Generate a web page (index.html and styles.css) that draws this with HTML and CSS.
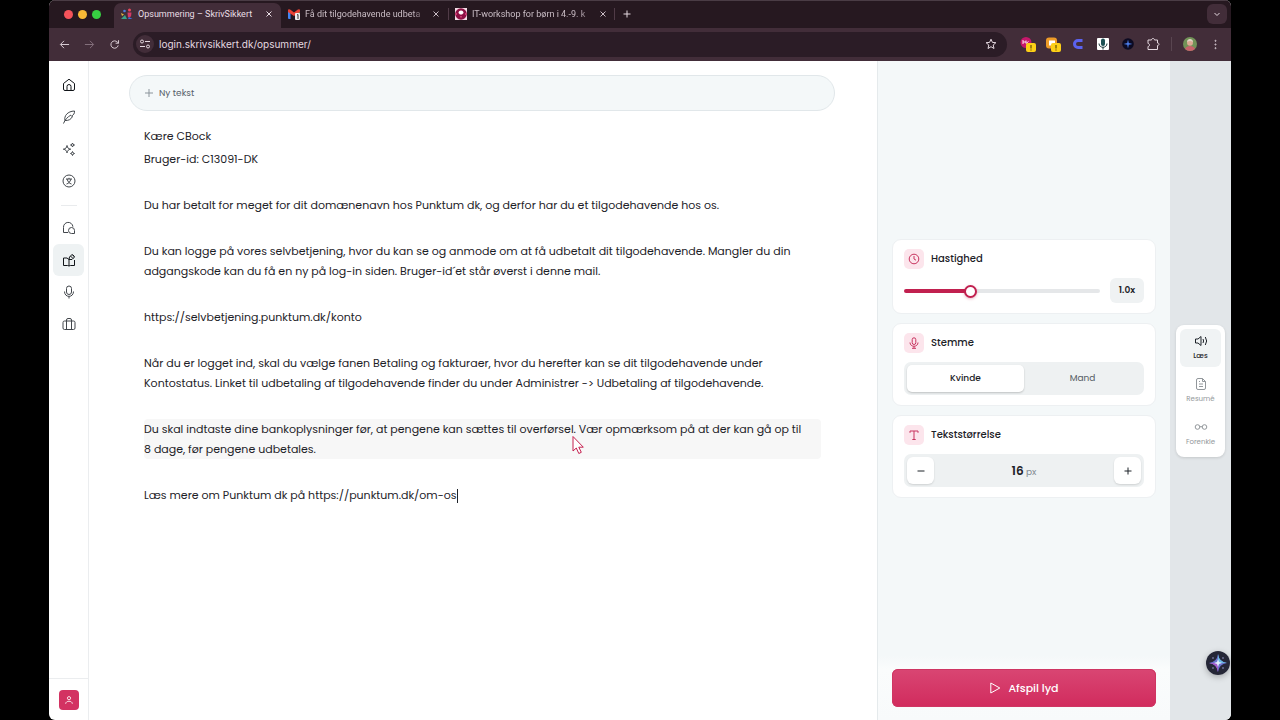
FILE: index.html
```html
<!DOCTYPE html>
<html lang="da">
<head>
    <meta charset="UTF-8">
    <meta name="viewport" content="width=device-width, initial-scale=1.0">
    <title>Opsummering – SkrivSikkert</title>
    <link rel="stylesheet" href="styles.css">
</head>
<body>
    <div class="window">
        <header class="browser">
            <div class="tab-strip">
                <div class="lights"><span class="light red"></span><span class="light yellow"></span><span class="light green"></span></div>
                <div class="tab active">
                    <svg class="favicon" viewBox="0 0 12 12"><circle cx="3.500" cy="3" r="1.300" fill="#4c7de0"/><circle cx="8.500" cy="2" r="1.500" fill="#e8495c"/><path d="M0 5l3 1.500L1 8z" fill="#e0b93e"/><path d="M6.500 4.500h4l-.5 4-3 1z" fill="#d53868"/><path d="M0 11l4-4 2 4z" fill="#39a28a"/><path d="M8 9l3.500 2H7z" fill="#3d6dd8"/></svg>
                    <span class="tab-title">Opsummering – SkrivSikkert</span>
                    <button class="tab-close" aria-label="Luk fane"><svg viewBox="0 0 8 8"><path d="M1.500 1.500l5 5M6.500 1.500l-5 5"/></svg></button>
                </div>
                <div class="tab">
                    <svg class="favicon" viewBox="0 0 12 12"><path d="M0 2.500L2.500 4v7H1a1 1 0 0 1-1-1z" fill="#4285f4"/><path d="M9.500 4L12 2.500V10a1 1 0 0 1-1 1H9.500z" fill="#34a853"/><path d="M0 2.500C0 1 1.500 1 2.500 1.800L6 4.500l3.500-2.700C10.500 1 12 1 12 2.500V4L6 8 0 4z" fill="#ea4335"/><rect x="7" y="5" width="5" height="7" rx="1" fill="#eee"/><path d="M9 7l1-.5V11" stroke="#333" fill="none"/></svg>
                    <span class="tab-title fade">Få dit tilgodehavende udbeta</span>
                    <button class="tab-close" aria-label="Luk fane"><svg viewBox="0 0 8 8"><path d="M1.500 1.500l5 5M6.500 1.500l-5 5"/></svg></button>
                </div>
                <div class="tab divided">
                    <svg class="favicon" viewBox="0 0 12 12"><rect width="12" height="12" fill="#f3dce6"/><circle cx="6" cy="6" r="5.800" fill="#8d0f43"/><path d="M3.500 5a2.500 2.500 0 0 1 5 0L7 6.500H5z" fill="#fff"/><path d="M5 8h2v1.500H5zM0 5h2v2H0zM10 5h2v2h-2z" fill="#c83a70"/></svg>
                    <span class="tab-title fade">IT-workshop for børn i 4.-9. k</span>
                    <button class="tab-close" aria-label="Luk fane"><svg viewBox="0 0 8 8"><path d="M1.500 1.500l5 5M6.500 1.500l-5 5"/></svg></button>
                </div>
                <button class="new-tab" aria-label="Ny fane"><svg viewBox="0 0 8 8"><path d="M4 .5v7M.5 4h7"/></svg></button>
                <button class="tab-menu" aria-label="Søg i faner"><svg viewBox="0 0 8 8"><path d="M1.500 3L4 5.500 6.500 3"/></svg></button>
            </div>
            <div class="toolbar">
                <button class="nav-btn" aria-label="Tilbage"><svg viewBox="0 0 12 12"><path d="M11 6H2M5.500 2L1.500 6l4 4"/></svg></button>
                <button class="nav-btn dim" aria-label="Frem"><svg viewBox="0 0 12 12"><path d="M1 6h9M6.500 2l4 4-4 4"/></svg></button>
                <button class="nav-btn" aria-label="Genindlæs"><svg viewBox="0 0 12 12"><path d="M10 7a4 4 0 1 1-.8-3.500L10.300 4.500M10.400 1.300v3.300H7.200"/></svg></button>
                <div class="address">
                    <button class="site-info" aria-label="Vis webstedsoplysninger"><svg viewBox="0 0 12 12"><circle cx="3" cy="3.500" r="1.500"/><path d="M6 3.500h5M1 8.500h5"/><circle cx="9" cy="8.500" r="1.500"/></svg></button>
                    <input class="url" type="text" aria-label="Adresse" value="login.skrivsikkert.dk/opsummer/">
                    <button class="star" aria-label="Bogmærke"><svg viewBox="0 0 12 12"><path d="M6 1.200l1.400 3.200 3.500.3-2.700 2.300.8 3.500L6 8.700l-3 1.800.8-3.500L1.100 4.700l3.500-.3z"/></svg></button>
                </div>
                <div class="extensions">
                    <button class="ext" aria-label="Udvidelse 1"><svg viewBox="0 0 16 16"><circle cx="6" cy="6.500" r="5.500" fill="#c5176b"/><path d="M3 4v4M3 6h3M6 4.500v3l2.500-2" stroke="#ffe3f0" fill="none"/><rect x="6" y="7" width="10" height="9" rx="2" fill="#fdd017"/><path d="M11 9v3.500M11 13.500v1" stroke="#453600"/></svg></button>
                    <button class="ext" aria-label="Udvidelse 2"><svg viewBox="0 0 16 16"><rect x="1" y="1.500" width="11" height="11" rx="3" fill="#ed9b28"/><rect x="4" y="4.500" width="6" height="5" fill="#fff"/><rect x="6" y="7" width="10" height="9" rx="2" fill="#fdd017"/><path d="M11 9v3.500M11 13.500v1" stroke="#453600"/></svg></button>
                    <button class="ext" aria-label="Udvidelse 3"><svg viewBox="0 0 16 16"><path d="M12.500 4.500H8a3.500 3.500 0 0 0 0 7h4.500" fill="none" stroke="#5b62ee" stroke-width="3"/></svg></button>
                    <button class="ext" aria-label="Udvidelse 4"><svg viewBox="0 0 16 16"><rect x="2" y="2" width="12" height="12" rx="1" fill="#fff"/><rect x="6" y="2.500" width="4" height="7.500" rx="2" fill="#1c5054"/><path d="M4 7.500c0 5 8 5 8 0M8 11v2.500" fill="none" stroke="#1b3639"/></svg></button>
                    <button class="ext" aria-label="Udvidelse 5"><svg viewBox="0 0 16 16"><circle cx="8" cy="8" r="5.800" fill="#0c0a22"/><path d="M8 3.500L8.800 7l3.700 1-3.700.8-.8 3.700-.8-3.700L3.500 8l3.700-1z" fill="#4a7be8"/></svg></button>
                    <button class="ext" aria-label="Udvidelser"><svg class="line" viewBox="0 0 16 16"><path d="M3 4h3.500c0-2 3-2 3 0H12.500v3c2 0 2 2.500 0 2.500V13.500H3v-3c2 0 2-3 0-3z"/></svg></button>
                </div>
                <button class="profile" aria-label="Profil"><svg viewBox="0 0 14 14"><circle cx="7" cy="7" r="7" fill="#719257"/><path d="M2 12c1-4 9-4 10 0-2.500 2.600-7.500 2.600-10 0z" fill="#c8626b"/><circle cx="7" cy="5.800" r="3" fill="#dba993"/><path d="M4 5c0-4 6-4 6 0-2-1.500-4-1.500-6 0z" fill="#e0d6c6"/></svg></button>
                <button class="nav-btn more" aria-label="Menu"><svg viewBox="0 0 12 12"><circle cx="6" cy="2" r=".6"/><circle cx="6" cy="6" r=".6"/><circle cx="6" cy="10" r=".6"/></svg></button>
            </div>
        </header>
        <div class="app">
            <nav class="sidebar">
                <a class="side-link strong" href="#" aria-label="Hjem"><svg viewBox="0 0 14 14"><path d="M1.500 5.500L7 1.200l5.500 4.300v5.500a1.500 1.500 0 0 1-1.500 1.500H3A1.500 1.500 0 0 1 1.500 11zM5 12.500V8.500a2 2 0 0 1 4 0v4"/></svg></a>
                <a class="side-link" href="#" aria-label="Skriv"><svg viewBox="0 0 14 14"><path d="M1.500 13.500C3 9.500 5.500 7 9 5M3 10.500C1.800 6 5.500 1.200 12.500 1c.2 2.500-1 4.200-3 5l1 .5C9 9.500 6.500 10.700 3 10.500z"/></svg></a>
                <a class="side-link" href="#" aria-label="Forbedr"><svg viewBox="0 0 14 14"><path d="M5 3.500c.5 2.500 1.200 3.200 3.700 3.700C6.200 7.700 5.500 8.400 5 10.900 4.500 8.400 3.800 7.700 1.300 7.200 3.800 6.700 4.500 6 5 3.500zM10.500 1l.6 1.400 1.400.6-1.400.6-.6 1.400-.6-1.400L8.500 3l1.400-.6zM10.500 9.500l.6 1.400 1.400.6-1.400.6-.6 1.400-.6-1.400-1.400-.6 1.400-.6z"/></svg></a>
                <a class="side-link" href="#" aria-label="Oversæt"><svg viewBox="0 0 14 14"><circle cx="7" cy="7" r="6"/><path d="M4 5h6M7 3.800V5M5 5c1 3 2.500 4.500 4.500 5M9 5c-1 3-2.500 4.500-4.500 5"/></svg></a>
                <hr class="side-rule">
                <a class="side-link" href="#" aria-label="Chat"><svg viewBox="0 0 14 14"><path d="M6 11.500H1.500V6.500a4.700 4.700 0 0 1 9.400-.8M9.500 6.500a3 3 0 1 0 0 6h3v-3a3 3 0 0 0-3-3z"/></svg></a>
                <a class="side-link current" href="#" aria-label="Opsummering"><svg viewBox="0 0 14 14"><path d="M7 6.500V13M5 5H1.500v7.500h4L7 13l1.500-.5h4V7M7 6.500L5 5M7 6.500l.5-2.500 2.500-2.500 2.500 2.500L10 6.500zM8.500 3l2.500 2.500M10.500 1.500l2 2"/></svg></a>
                <a class="side-link" href="#" aria-label="Diktering"><svg viewBox="0 0 14 14"><rect x="4.500" y="1" width="5" height="8.500" rx="2.500"/><path d="M2.500 6.500C2.500 13 11.500 13 11.500 6.500M7 11.500V13.500"/></svg></a>
                <a class="side-link" href="#" aria-label="Værktøjer"><svg viewBox="0 0 14 14"><rect x="1" y="4" width="12" height="8.500" rx="1.500"/><path d="M4.500 12.500V3a1.500 1.500 0 0 1 1.500-1.500h2A1.500 1.500 0 0 1 9.500 3v9.500"/></svg></a>
                <div class="account">
                    <button class="account-btn" aria-label="Konto"><svg viewBox="0 0 12 12"><circle cx="6" cy="3.800" r="1.900"/><path d="M2 10.500c0-4 8-4 8 0"/></svg></button>
                </div>
            </nav>
            <main class="content">
                <button class="new-text"><svg viewBox="0 0 8 8"><path d="M4 0v8M0 4h8"/></svg>Ny tekst</button>
                <div class="editor" role="textbox" aria-multiline="true" aria-label="Tekst" contenteditable="true" spellcheck="false">
                    <p class="tight">Kære CBock</p>
                    <p>Bruger-id: C13091-DK</p>
                    <p>Du har betalt for meget for dit domænenavn hos Punktum dk, og derfor har du et tilgodehavende hos os.</p>
                    <p>Du kan logge på vores selvbetjening, hvor du kan se og anmode om at få udbetalt dit tilgodehavende. Mangler du din<br>adgangskode kan du få en ny på log-in siden. Bruger-id´et står øverst i denne mail.</p>
                    <p>https://selvbetjening.punktum.dk/konto</p>
                    <p>Når du er logget ind, skal du vælge fanen Betaling og fakturaer, hvor du herefter kan se dit tilgodehavende under<br>Kontostatus. Linket til udbetaling af tilgodehavende finder du under Administrer -&gt; Udbetaling af tilgodehavende.</p>
                    <p class="marked">Du skal indtaste dine bankoplysninger før, at pengene kan sættes til overførsel. Vær opmærksom på at der kan gå op til<br>8 dage, før pengene udbetales.<svg class="pointer" viewBox="0 0 14 20"><path d="M2 1.500v14.500l3.300-3 2.500 5.500 2.500-1.200-2.500-5.100h4.500z"/></svg></p>
                    <p>Læs mere om Punktum dk på https://punktum.dk/om-os<span class="caret"></span></p>
                </div>
            </main>
            <aside class="panel">
                <div class="cards">
                    <section class="card">
                        <h2 class="card-title"><span class="badge"><svg viewBox="0 0 12 12"><circle cx="6" cy="6" r="4.800"/><path d="M6 3v3l2 1.200"/></svg></span><label for="speed">Hastighed</label></h2>
                        <div class="speed-row">
                            <input class="slider" id="speed" type="range" min="0" max="100" value="33">
                            <output class="speed-value" for="speed">1.0x</output>
                        </div>
                    </section>
                    <section class="card">
                        <h2 class="card-title"><span class="badge"><svg viewBox="0 0 12 12"><rect x="4.200" y=".8" width="3.600" height="6.700" rx="1.800"/><path d="M2 5.500c0 5 8 5 8 0M6 9.200v2M4 11.300h4"/></svg></span>Stemme</h2>
                        <div class="segmented" role="radiogroup" aria-label="Stemme">
                            <input id="female" type="radio" name="voice" checked><label for="female">Kvinde</label>
                            <input id="male" type="radio" name="voice"><label for="male">Mand</label>
                        </div>
                    </section>
                    <section class="card">
                        <h2 class="card-title"><span class="badge"><svg viewBox="0 0 12 12"><path d="M2 3.800V2h8v1.800M6 2v8.500M4.300 10.500h3.400"/></svg></span>Tekststørrelse</h2>
                        <div class="stepper">
                            <button class="step" aria-label="Mindre"><svg viewBox="0 0 8 8"><path d="M.5 4h7"/></svg></button>
                            <span class="size"><b>16</b> px</span>
                            <button class="step" aria-label="Større"><svg viewBox="0 0 8 8"><path d="M.5 4h7M4 .5v7"/></svg></button>
                        </div>
                    </section>
                </div>
                <div class="play-area">
                    <button class="play"><svg viewBox="0 0 12 12"><path d="M1.800 1l9 5-9 5z"/></svg>Afspil lyd</button>
                </div>
            </aside>
            <div class="rail">
                <div class="modes">
                    <button class="mode selected"><svg viewBox="0 0 14 14"><path d="M1.500 5v4H4l3 2.500v-9L4 5zM9 5q1.200 2 0 4M11.300 3q2.700 4 0 8"/></svg>Læs</button>
                    <button class="mode"><svg viewBox="0 0 14 14"><path d="M8.500 1.500H4A1.500 1.500 0 0 0 2.500 3v8A1.500 1.500 0 0 0 4 12.500h6a1.500 1.500 0 0 0 1.500-1.500V4.500zM8.500 1.500v3h3M5 7h4M5 9.500h4M5 4.500h1"/></svg>Resumé</button>
                    <button class="mode"><svg viewBox="0 0 14 14"><circle cx="3.500" cy="7" r="2.300"/><circle cx="10.500" cy="7" r="2.300"/><path d="M5.800 7q1.200-1 2.400 0"/></svg>Forenkle</button>
                </div>
                <button class="assistant" aria-label="Assistent"><svg viewBox="0 0 24 24"><circle cx="12" cy="12" r="12" fill="#252737"/><path d="M12 3q1 8 9 9-8 1-9 9-1-8-9-9 8-1 9-9z" fill="#6a72cd"/><path d="M12 3q1 8 9 9h-9z" fill="#69bce5"/><path d="M12 21q-1-8-9-9h9z" fill="#a45acb"/><path d="M12 8l1 3 3 1-3 1-1 3-1-3-3-1 3-1z" fill="#e3edff"/><g fill="#9c9fd4"><circle cx="7" cy="7" r=".8"/><circle cx="17" cy="7" r=".8"/><circle cx="7" cy="17" r=".8"/><circle cx="17" cy="17" r=".8"/></g></svg></button>
            </div>
        </div>
    </div>
</body>
</html>
```

FILE: styles.css
```css
* {
    margin: 0;
    padding: 0;
    box-sizing: border-box;
}
body {
    background: #000;
    padding: 0 49px;
    font-family: Poppins, Inter, sans-serif;
    font-size: 11px;
    color: #1d2228;
}
button, input {
    font: inherit;
    color: inherit;
    border: 0;
    background: none;
}
button {
    display: flex;
    align-items: center;
    justify-content: center;
    flex: none;
}
svg {
    display: block;
    flex: none;
    fill: none;
    stroke: currentColor;
}
svg [fill]:not([stroke]), svg g[fill] circle {
    stroke: none;
}
.window {
    display: flex;
    flex-direction: column;
    height: 100vh;
    background: #fff;
    overflow: hidden;
    border-radius: 6px;
}

/* browser chrome */
.browser {
    font-family: Inter, sans-serif;
    color: #e5d9e0;
    background: #261820;
    border-top: 1px solid #4a3c45;
}
.tab-strip {
    display: flex;
    align-items: center;
    height: 27px;
    padding-right: 4px;
    padding-bottom: 1px;
    font-family: Roboto, sans-serif;
    font-size: 9px;
}
.lights {
    display: flex;
    gap: 5px;
    width: 65px;
    padding-left: 15px;
}
.light {
    width: 9px;
    height: 9px;
    border-radius: 50%;
}
.red { background: #f4535a; }
.yellow { background: #f8b936; }
.green { background: #37cf42; }
.tab {
    display: flex;
    align-items: center;
    gap: 5px;
    width: 167px;
    height: 26px;
    padding: 0 8px 0 7px;
    color: #c9bcc4;
}
.tab.active {
    height: 24px;
    align-self: flex-end;
    padding-bottom: 2px;
    border-radius: 7px 7px 0 0;
    background: #422d39;
    box-shadow: 0 1px #422d39;
    color: #e9dee5;
}
.divided {
    background: linear-gradient(#503b47, #503b47) 0 50% / 1px 12px no-repeat, linear-gradient(#503b47, #503b47) 100% 50% / 1px 12px no-repeat;
}
.favicon {
    width: 12px;
    height: 12px;
}
.tab-title {
    flex: 1;
    white-space: nowrap;
}
.fade {
    -webkit-mask-image: linear-gradient(90deg, #000 88%, transparent);
    mask-image: linear-gradient(90deg, #000 88%, transparent);
}
.tab-close svg, .new-tab svg, .tab-menu svg {
    width: 8px;
    height: 8px;
}
.new-tab {
    width: 24px;
    height: 20px;
}
.tab-menu {
    margin-left: auto;
    width: 20px;
    height: 20px;
    border-radius: 6px;
    background: #422d39;
}
.toolbar {
    display: flex;
    align-items: center;
    height: 33px;
    padding: 0 8px 1px 3px;
    background: #422d39;
}
.nav-btn {
    width: 25px;
    height: 24px;
}
.nav-btn svg {
    width: 11px;
    height: 11px;
}
.dim {
    color: #8a7581;
}
.address {
    display: flex;
    align-items: center;
    flex: 1;
    gap: 5px;
    height: 25px;
    margin-left: 6px;
    padding: 0 10px 0 3px;
    border-radius: 13px;
    background: #2b1c26;
}
.site-info {
    width: 18px;
    height: 18px;
    border-radius: 50%;
    background: #422d39;
}
.site-info svg, .star svg {
    width: 12px;
    height: 12px;
}
.url {
    flex: 1;
    min-width: 0;
    font-size: 10px;
}
.extensions {
    display: flex;
    gap: 9px;
    padding: 0 10px 0 13px;
}
.ext svg {
    width: 16px;
    height: 16px;
}
.profile {
    padding-left: 11px;
    border-left: 1px solid #594550;
}
.profile svg {
    width: 14px;
    height: 14px;
}
.more {
    margin-left: 6px;
    margin-right: -5px;
}

/* app */
.app {
    display: flex;
    flex: 1;
    min-height: 0;
}
.sidebar {
    display: flex;
    flex-direction: column;
    align-items: center;
    width: 40px;
    padding-top: 8px;
    border-right: 1px solid #ebedef;
}
.side-link {
    display: flex;
    align-items: center;
    justify-content: center;
    width: 31px;
    height: 32px;
    border-radius: 6px;
    color: #42474c;
}
.side-link svg {
    width: 14px;
    height: 14px;
}
.strong, .current {
    color: #101418;
}
.current {
    background: #eef2f3;
}
.side-rule {
    width: 16px;
    margin: 8px 0 6px;
    border: 0;
    border-top: 1px solid #e9ebed;
}
.account {
    display: flex;
    justify-content: center;
    width: 100%;
    height: 42px;
    margin-top: auto;
    padding-top: 11px;
    border-top: 1px solid #ebedef;
}
.account-btn {
    width: 20px;
    height: 20px;
    border-radius: 4px;
    background: #d33262;
    color: #fff;
}
.account-btn svg {
    width: 10px;
    height: 10px;
}
.content {
    flex: 1;
    min-width: 0;
    padding: 14px 42px 0 40px;
}
.new-text {
    justify-content: flex-start;
    gap: 6px;
    width: 100%;
    height: 36px;
    padding: 0 15px;
    border: 1px solid #e1e7ea;
    border-radius: 18px;
    background: #f4f8f9;
    font-size: 9px;
    color: #566069;
}
.new-text svg {
    width: 8px;
    height: 8px;
    stroke: #8b949b;
}
.editor {
    padding: 15px 14px 0 15px;
    line-height: 20px;
    white-space: nowrap;
    outline: 0;
}
.editor p {
    margin-bottom: 26px;
}
.editor .tight {
    margin-bottom: 3px;
}
.marked {
    position: relative;
    background: #f7f7f7;
    border-radius: 4px;
}
.pointer {
    position: absolute;
    left: 427px;
    top: 16px;
    width: 14px;
    height: 20px;
    fill: #fff;
    stroke: #c5204f;
}
.caret {
    display: inline-block;
    height: 14px;
    border-left: 1px solid #1d2228;
    vertical-align: middle;
}

/* settings panel */
.panel {
    display: flex;
    flex-direction: column;
    width: 293px;
    padding: 0 14px;
    border-left: 1px solid #e5eaec;
    background: #f4f8f9;
}
.cards {
    display: flex;
    flex-direction: column;
    justify-content: center;
    flex: 1;
    gap: 9px;
    padding-top: 20px;
}
.card {
    padding: 9px 11px 10px;
    border: 1px solid #edf0f2;
    border-radius: 9px;
    background: #fff;
}
.card-title {
    display: flex;
    align-items: center;
    gap: 7px;
    font-size: 10px;
    font-weight: 500;
}
.badge {
    display: flex;
    align-items: center;
    justify-content: center;
    width: 20px;
    height: 20px;
    border-radius: 5px;
    background: #fce5ec;
    color: #c8345f;
}
.badge svg {
    width: 12px;
    height: 12px;
}
.speed-row {
    display: flex;
    align-items: center;
    gap: 10px;
    margin-top: 9px;
}
.slider {
    appearance: none;
    flex: 1;
    min-width: 0;
    height: 14px;
}
.slider::-webkit-slider-runnable-track {
    height: 4px;
    border-radius: 2px;
    background: linear-gradient(90deg, #c1204f 34%, #e5e7e9 34%);
}
.slider::-webkit-slider-thumb {
    appearance: none;
    width: 13px;
    height: 13px;
    margin-top: -4px;
    border: 2px solid #c1204f;
    border-radius: 50%;
    background: #fff;
    box-shadow: 0 1px 3px #c1204f55;
}
.speed-value {
    width: 34px;
    border-radius: 6px;
    background: #eff2f3;
    font-size: 9px;
    font-weight: 600;
    line-height: 25px;
    text-align: center;
}
.segmented {
    display: flex;
    margin-top: 9px;
    padding: 3px;
    border-radius: 7px;
    background: #eef1f2;
}
.segmented input {
    position: absolute;
    opacity: 0;
}
.segmented label {
    flex: 1;
    border-radius: 5px;
    font-size: 9px;
    line-height: 27px;
    text-align: center;
    color: #555c63;
}
.segmented input:checked + label {
    background: #fff;
    color: #1d2228;
    font-weight: 500;
    box-shadow: 0 1px 2px #0003;
}
.stepper {
    display: flex;
    align-items: center;
    justify-content: space-between;
    margin-top: 9px;
    padding: 3px;
    border-radius: 7px;
    background: #eef1f2;
}
.step {
    width: 27px;
    height: 27px;
    border-radius: 6px;
    background: #fff;
    box-shadow: 0 1px 2px #0002;
}
.step svg {
    width: 8px;
    height: 8px;
}
.size {
    font-size: 9px;
    color: #858c93;
}
.size b {
    font-size: 12px;
    font-weight: 600;
    color: #1d2228;
}
.play-area {
    margin: 0 -14px;
    padding: 13px 14px;
    background: linear-gradient(#f4f8f9, #fafcfc 20%, #f8fafb);
}
.play {
    gap: 7px;
    width: 100%;
    height: 38px;
    border-radius: 6px;
    background: linear-gradient(#d94673, #d12b5d);
    box-shadow: inset 0 0 0 1px #cf3562;
    font-size: 11px;
    font-weight: 500;
    color: #fff;
}
.play svg {
    width: 12px;
    height: 12px;
}
.rail {
    position: relative;
    display: flex;
    align-items: center;
    justify-content: center;
    width: 61px;
    background: #e2e6e9;
}
.modes {
    display: flex;
    flex-direction: column;
    gap: 5px;
    width: 49px;
    padding: 4px;
    border-radius: 8px;
    background: #fff;
    box-shadow: 0 1px 3px #0002;
}
.mode {
    flex-direction: column;
    gap: 3px;
    height: 38px;
    border-radius: 6px;
    font-size: 7px;
    line-height: 10px;
    color: #92979b;
}
.mode svg {
    width: 14px;
    height: 14px;
}
.selected {
    background: #f0f3f4;
    color: #1d2228;
    font-weight: 500;
}
.assistant {
    position: absolute;
    right: 1px;
    bottom: 45px;
    border-radius: 50%;
    box-shadow: 0 2px 6px #0004;
}
.assistant svg {
    width: 24px;
    height: 24px;
}
```
